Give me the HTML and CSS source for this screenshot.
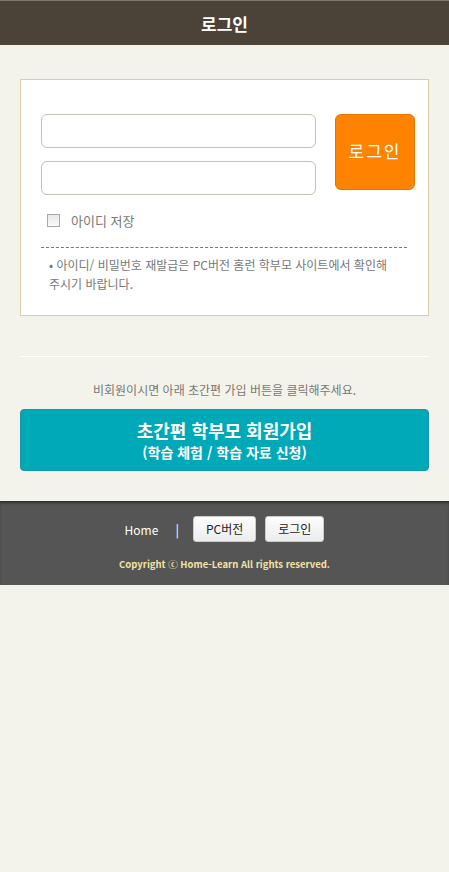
FILE: index.html
```html
<!DOCTYPE html>
<html lang="ko">
<head>
    <meta charset="UTF-8">
    <meta name="viewport" content="width=device-width, initial-scale=1.0">
    <title>로그인</title>
    <link rel="stylesheet" href="styles.css">
</head>
<body>

<header class="top-bar">
    <h1>로그인</h1>
</header>

<main class="content">
    <form class="login-box" id="loginForm">
        <div class="login-row">
            <div class="fields">
                <input type="text" class="field" id="userId" name="userId">
                <input type="password" class="field" id="userPw" name="userPw">
            </div>
            <button type="submit" class="login-btn">로그인</button>
        </div>
        <label class="save-id">
            <span class="check"></span>
            아이디 저장
        </label>
        <p class="notice">• 아이디/ 비밀번호 재발급은 PC버전 홈런 학부모 사이트에서 확인해 주시기 바랍니다.</p>
    </form>

    <div class="divider"></div>

    <p class="join-msg">비회원이시면 아래 초간편 가입 버튼을 클릭해주세요.</p>
    <a class="join-btn" href="#">
        <strong>초간편 학부모 회원가입</strong>
        <span>(학습 체험 / 학습 자료 신청)</span>
    </a>
</main>

<footer class="footer">
    <div class="footer-links">
        <a href="#" class="home-link">Home</a>
        <span class="sep">|</span>
        <a href="#" class="small-btn">PC버전</a>
        <a href="#" class="small-btn">로그인</a>
    </div>
    <p class="copyright">Copyright ⓒ Home-Learn All rights reserved.</p>
</footer>

</body>
</html>
```

FILE: styles.css
```css
body {
    margin: 0;
    background-color: #f4f3eb;
    font-family: "Noto Sans CJK KR", "Noto Sans", sans-serif;
    color: #777;
}
.top-bar {
    height: 44px;
    background-color: #4b4337;
    border-top: 1px solid #7d7872;
    display: flex;
    align-items: center;
    justify-content: center;
}
.top-bar h1 {
    margin: 0;
    font-size: 17px;
    font-weight: bold;
    color: #fff;
}
.content {
    padding: 34px 20px 30px;
}
.login-box {
    background: #fff;
    border: 1px solid #dccdaa;
    padding: 34px 13px 22px 20px;
}
.login-row {
    display: flex;
    gap: 19px;
}
.fields {
    flex: 1;
    display: flex;
    flex-direction: column;
    gap: 13px;
}
.field {
    height: 34px;
    box-sizing: border-box;
    border: 1px solid #c9c0b0;
    border-radius: 6px;
    padding: 0 10px;
    font-size: 14px;
}
.login-btn {
    width: 80px;
    height: 76px;
    background-color: #ff8200;
    border: 1px solid #e57500;
    border-radius: 6px;
    color: #fff;
    font-family: inherit;
    font-size: 17px;
    letter-spacing: 2px;
    padding-bottom: 4px;
    cursor: pointer;
}
.save-id {
    display: flex;
    align-items: center;
    margin: 14px 0 0 6px;
    font-size: 13px;
    color: #777;
    height: 22px;
}
.check {
    width: 11px;
    height: 11px;
    border: 1px solid #a9a9a9;
    background: linear-gradient(#e8e8e8, #fafafa);
    margin-right: 11px;
}
.notice {
    margin: 16px 8px 0 0;
    padding: 7px 0 0 8px;
    border-top: 1px dashed #8a7547;
    font-size: 12px;
    line-height: 19px;
    color: #777;
    word-break: keep-all;
}
.divider {
    height: 1px;
    background: #fff;
    margin: 40px 0 0;
}
.join-msg {
    margin: 24px 0 11px;
    text-align: center;
    font-size: 12px;
    color: #777;
}
.join-btn {
    display: flex;
    flex-direction: column;
    align-items: center;
    height: 60px;
    justify-content: center;
    gap: 2px;
    background-color: #00a9b8;
    border: 1px solid #1798a3;
    border-radius: 4px;
    color: #fff;
    text-decoration: none;
}
.join-btn strong {
    font-size: 18px;
    line-height: 21px;
}
.join-btn span {
    font-size: 14px;
    font-weight: bold;
    line-height: 18px;
}
.footer {
    background-color: #555;
    box-shadow: inset 0 3px 3px -1px #2e2e2e;
    padding: 15px 0 14px;
    text-align: center;
}
.footer-links {
    display: flex;
    justify-content: center;
    align-items: center;
}
.home-link {
    color: #fff;
    font-size: 12px;
    text-decoration: none;
}
.sep {
    color: #fff;
    font-size: 13px;
    margin: 0 14px 0 17px;
}
.small-btn {
    height: 24px;
    line-height: 24px;
    padding: 0 12px;
    margin-right: 9px;
    background: linear-gradient(#fdfdfd, #ececec);
    border: 1px solid #ccc;
    border-radius: 3px;
    color: #222;
    font-size: 12px;
    text-decoration: none;
}
.small-btn:last-child {
    margin-right: 0;
}
.copyright {
    margin: 15px 0 0;
    font-size: 9.5px;
    font-weight: bold;
    color: #f2e3a4;
}
```
